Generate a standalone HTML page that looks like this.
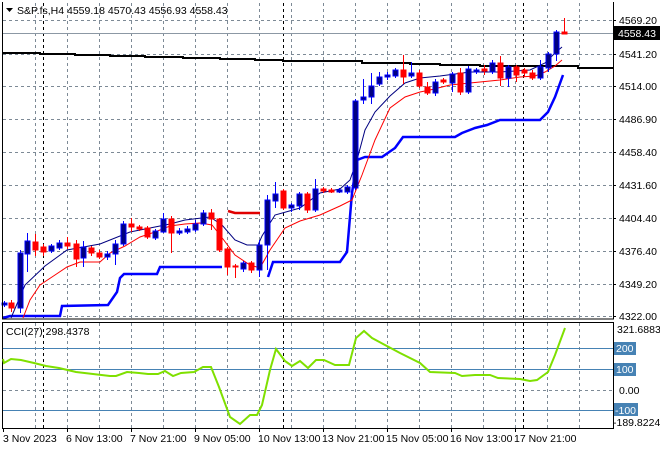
<!DOCTYPE html>
<html><head><meta charset="utf-8"><style>
html,body{margin:0;padding:0;background:#fff;}
svg{display:block;font-family:"Liberation Sans",sans-serif;font-size:10.5px;}
</style></head><body>
<svg width="660" height="450" viewBox="0 0 660 450" xmlns="http://www.w3.org/2000/svg">
<rect width="660" height="450" fill="#fff"/>
<!-- grid main -->
<g stroke="#7d8a96" stroke-width="1" stroke-dasharray="3,3" fill="none">
<path d="M35.5 3V318M67.5 3V318M99.5 3V318M131.5 3V318M163.5 3V318M195.5 3V318M227.5 3V318M259.5 3V318M291.5 3V318M323.5 3V318M355.5 3V318M387.5 3V318M419.5 3V318M451.5 3V318M483.5 3V318M515.5 3V318M547.5 3V318M579.5 3V318"/>
<path d="M3 20.5H613M3 54.5H613M3 86.5H613M3 119.5H613M3 152.5H613M3 185.5H613M3 218.5H613M3 251.5H613M3 284.5H613M3 316.5H613"/>
<path d="M35.5 323V428M67.5 323V428M99.5 323V428M131.5 323V428M163.5 323V428M195.5 323V428M227.5 323V428M259.5 323V428M291.5 323V428M323.5 323V428M355.5 323V428M387.5 323V428M419.5 323V428M451.5 323V428M483.5 323V428M515.5 323V428M547.5 323V428M579.5 323V428"/>
<path d="M3 390.5H613"/>
</g>
<g stroke="#000" stroke-width="1" stroke-dasharray="3,3">
<path d="M43.5 3V318M283.5 3V318M523.5 3V318M43.5 323V428M283.5 323V428M523.5 323V428"/>
</g>
<!-- current price line -->
<path d="M3 33.5H613" stroke="#8c98a4" stroke-width="1"/>
<!-- long MA -->
<polyline fill="none" stroke="#000" stroke-width="2" points="3,53 40,53 40,54 75,54 75,55 110,55 110,56 145,56 145,57 183,57 183,58 220,58 220,59 255,59 255,60 283,60 283,61 362,61 362,63 410,63 410,64 440,64 440,65 480,65 480,66 578,66 578,68 613,68"/>
<!-- supertrend -->
<polyline fill="none" stroke="#0000ff" stroke-width="2.5" points="3,318 10,316 35,316 60,316 62,306 108,305 117,292 120,278 124,274 157,274 160,267 222,267"/>
<polyline fill="none" stroke="#e00000" stroke-width="2.5" points="228,211 235,213 260,213"/>
<polyline fill="none" stroke="#0000ff" stroke-width="2.5" points="268,277 273,262 340,262 347,252 352,193 357,160 365,157 382,157 395,148 403,137 455,137 462,133 475,128 487,125 500,120 540,120 548,112 555,97 563,75"/>
<!-- MAs -->
<polyline fill="none" stroke="#000080" stroke-width="1" points="11,318 25,285 45,266 67,250 100,244 130,232 170,224 185,220 210,217 222,225 235,240 247,245 258,245 262,236 275,215 300,208 320,193 340,189 350,180 357,160 365,130 375,112 390,96 405,83 420,78 440,76 470,72 500,72 530,70 545,63 555,53 562,47"/>
<polyline fill="none" stroke="#ff0000" stroke-width="1" points="23,318 30,300 40,285 55,275 67,267 80,262 100,262 110,253 125,246 140,237 155,232 170,226 185,224 200,223 212,225 220,235 235,255 250,265 260,268 270,250 285,228 300,221 320,215 340,206 352,200 362,175 375,140 390,108 405,97 420,92 430,90 450,85 470,83 500,80 520,77 535,76 545,72 555,66 562,60"/>
<!-- candles -->
<g stroke-width="1">
<g stroke="#0000ff" fill="#000080">
<path d="M4.5 301V307M20.5 250V313M27.5 233V272M51.5 244V253M59.5 240V250M83.5 241V267M107.5 251V260M115.5 240V265M123.5 221V246M155.5 229V240M163.5 213V233M179.5 228V235M187.5 226V234M195.5 220V232M203.5 210V226M243.5 261V272M259.5 240V277M267.5 195V270M275.5 182V208M291.5 203V212M299.5 192V210M315.5 179V212M339.5 188V193M347.5 185V194M355.5 99V190M363.5 79V104M371.5 73V104M379.5 72V86M387.5 72V80M395.5 68V78M411.5 62V78M435.5 79V96M452.5 72V92M468.5 66V94M476.5 68V74M492.5 60V74M508.5 65V87M540.5 60V80M548.5 52V72M556.5 30V61"/>
<rect x="2" y="303" width="5" height="2"/><rect x="18" y="253" width="5" height="55"/><rect x="25" y="241" width="5" height="13"/><rect x="49" y="246" width="5" height="5"/><rect x="57" y="243" width="5" height="5"/><rect x="81" y="247" width="5" height="11"/><rect x="105" y="254" width="5" height="3"/><rect x="113" y="244" width="5" height="10"/><rect x="121" y="224" width="5" height="20"/><rect x="153" y="231" width="5" height="7"/><rect x="161" y="219" width="5" height="13"/><rect x="177" y="231" width="5" height="2"/><rect x="185" y="229" width="5" height="3"/><rect x="193" y="224" width="5" height="6"/><rect x="201" y="213" width="5" height="11"/><rect x="241" y="263" width="5" height="6"/><rect x="257" y="245" width="5" height="25"/><rect x="265" y="200" width="5" height="45"/><rect x="273" y="194" width="5" height="7"/><rect x="289" y="205" width="5" height="3"/><rect x="297" y="194" width="5" height="12"/><rect x="313" y="189" width="5" height="21"/><rect x="337" y="190" width="5" height="2"/><rect x="345" y="187" width="5" height="5"/><rect x="353" y="101" width="5" height="87"/><rect x="361" y="97" width="5" height="3"/><rect x="369" y="86" width="5" height="11"/><rect x="377" y="77" width="5" height="7"/><rect x="385" y="75" width="5" height="2"/><rect x="393" y="70" width="5" height="6"/><rect x="409" y="73" width="5" height="3"/><rect x="433" y="82" width="5" height="11"/><rect x="450" y="74" width="5" height="9"/><rect x="466" y="69" width="5" height="23"/><rect x="474" y="70" width="5" height="2"/><rect x="490" y="63" width="5" height="9"/><rect x="506" y="67" width="5" height="11"/><rect x="538" y="67" width="5" height="11"/><rect x="546" y="54" width="5" height="14"/><rect x="554" y="32" width="5" height="22"/>
</g>
<g stroke="#ff0000" fill="#ff0000">
<path d="M11.5 300V312M35.5 234V256M43.5 244V256M67.5 237V249M76.5 240V267M91.5 246V256M99.5 250V259M131.5 218V232M139.5 225V231M147.5 226V239M171.5 216V253M211.5 209V230M219.5 218V252M227.5 247V275M235.5 264V278M251.5 261V273M283.5 189V210M307.5 192V213M323.5 187V193M331.5 188V193M403.5 55V84M419.5 70V88M427.5 82V95M443.5 78V84M460.5 68V95M484.5 65V75M500.5 56V86M516.5 65V82M524.5 68V77M532.5 70V80M564.5 18V34"/>
<rect x="9" y="303" width="5" height="5"/><rect x="33" y="242" width="5" height="8"/><rect x="41" y="247" width="5" height="5"/><rect x="65" y="243" width="5" height="3"/><rect x="74" y="244" width="5" height="15"/><rect x="89" y="248" width="5" height="5"/><rect x="97" y="253" width="5" height="4"/><rect x="129" y="224" width="5" height="3"/><rect x="137" y="227" width="5" height="2"/><rect x="145" y="228" width="5" height="9"/><rect x="169" y="219" width="5" height="14"/><rect x="209" y="213" width="5" height="6"/><rect x="217" y="219" width="5" height="31"/><rect x="225" y="249" width="5" height="18"/><rect x="233" y="266" width="5" height="1"/><rect x="249" y="263" width="5" height="7"/><rect x="281" y="191" width="5" height="17"/><rect x="305" y="194" width="5" height="16"/><rect x="321" y="189" width="5" height="2"/><rect x="329" y="190" width="5" height="2"/><rect x="401" y="70" width="5" height="7"/><rect x="417" y="73" width="5" height="13"/><rect x="425" y="87" width="5" height="6"/><rect x="441" y="80" width="5" height="2"/><rect x="458" y="73" width="5" height="19"/><rect x="482" y="69" width="5" height="2"/><rect x="498" y="63" width="5" height="15"/><rect x="514" y="67" width="5" height="8"/><rect x="522" y="70" width="5" height="3"/><rect x="530" y="73" width="5" height="5"/><rect x="562" y="32" width="5" height="2"/>
</g>
</g>
<!-- frames -->
<path d="M2.5 2V319H613.5V2" fill="none" stroke="#000"/>
<path d="M2.5 322.5H613.5V428.5H2.5Z" fill="none" stroke="#000"/>
<!-- CCI levels -->
<g stroke="#4682b4" stroke-width="1"><path d="M3 348.5H613M3 369.5H613M3 410.5H613"/></g>
<polyline fill="none" stroke="#7fe000" stroke-width="2" points="3,359 4,363 11,359 21,360 34,363 46,366 59,368 76,372 93,374 110,376 116,376 127,372 139,373 148,374 158,374 165,371 173,376 181,373 194,372 203,367 211,367 219,387 230,417 240,424 250,415 257,415 262,405 270,370 276,349 285,361 292,366 300,361 308,368 316,360 324,360 335,365 349,365 356,338 364,331 372,338 385,345 400,353 420,363 430,372 455,373 462,376 475,375 490,375 498,378 520,379 530,381 537,380 548,372 555,355 565,328"/>
<!-- texts -->
<path d="M6 8H13L9.5 12Z" fill="#000"/>
<text x="17" y="14" fill="#000">S&amp;P.fs,H4  4559.18 4570.43 4556.93 4558.43</text>
<text x="6" y="335" fill="#000">CCI(27) 298.4378</text>
<g fill="#000">
<text x="619" y="24">4569.20</text>
<text x="619" y="58">4541.20</text>
<text x="619" y="90">4514.00</text>
<text x="619" y="123">4486.90</text>
<text x="619" y="156">4458.40</text>
<text x="619" y="189">4431.60</text>
<text x="619" y="222">4404.40</text>
<text x="619" y="255">4376.40</text>
<text x="619" y="288">4349.20</text>
<text x="619" y="320">4322.00</text>
<text x="617" y="333">321.6883</text>
<text x="619" y="394">0.00</text>
<text x="613" y="426">-189.8224</text>
</g>
<rect x="614" y="26" width="46" height="14" fill="#000"/>
<text x="618" y="37" fill="#fff">4558.43</text>
<g fill="#4682b4"><rect x="614" y="342" width="22" height="13"/><rect x="614" y="363" width="22" height="13"/><rect x="614" y="403" width="24" height="13"/></g>
<g fill="#fff"><text x="616" y="352">200</text><text x="616" y="373">100</text><text x="615" y="414">-100</text></g>
<g stroke="#000"><path d="M613 20.5h3M613 54.5h3M613 86.5h3M613 119.5h3M613 152.5h3M613 185.5h3M613 218.5h3M613 251.5h3M613 284.5h3M613 316.5h3"/>
<path d="M3.5 429v3M67.5 429v3M131.5 429v3M195.5 429v3M259.5 429v3M323.5 429v3M387.5 429v3M451.5 429v3M515.5 429v3"/></g>
<g fill="#000">
<text x="3" y="442">3 Nov 2023</text>
<text x="66" y="442">6 Nov 13:00</text>
<text x="130" y="442">7 Nov 21:00</text>
<text x="194" y="442">9 Nov 05:00</text>
<text x="258" y="442">10 Nov 13:00</text>
<text x="322" y="442">13 Nov 21:00</text>
<text x="386" y="442">15 Nov 05:00</text>
<text x="450" y="442">16 Nov 13:00</text>
<text x="514" y="442">17 Nov 21:00</text>
</g>
</svg>
</body></html>
